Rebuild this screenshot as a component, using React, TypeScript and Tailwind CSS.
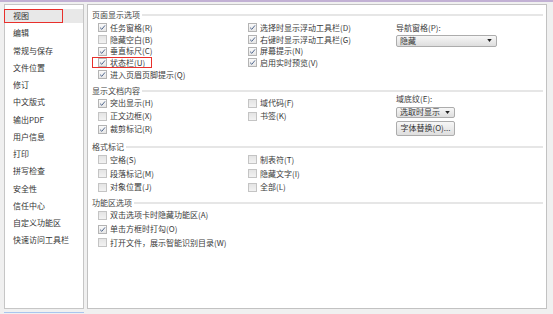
import React from 'react';

const font = { fontFamily: '"Noto Sans CJK SC", "Noto Sans", sans-serif' };

const navItems = [
  '视图',
  '编辑',
  '常规与保存',
  '文件位置',
  '修订',
  '中文版式',
  '输出PDF',
  '用户信息',
  '打印',
  '拼写检查',
  '安全性',
  '信任中心',
  '自定义功能区',
  '快速访问工具栏',
];

const Check: React.FC<{ checked?: boolean; label: string; h: string; outlined?: boolean }> = ({
  checked,
  label,
  h,
  outlined,
}) => (
  <div className={`relative flex items-center gap-[3px] ${h}`}>
    {checked ? (
      <span className="flex h-[9px] w-[9px] shrink-0 items-center justify-center border border-[#b4b4b4] bg-gradient-to-b from-[#fafafa] to-[#e6e6e6]">
        <svg viewBox="0 0 10 10" className="h-[7px] w-[7px]">
          <path d="M1.5 5.2 L4 7.6 L8.6 2" fill="none" stroke="#4e648c" strokeWidth="1.4" />
        </svg>
      </span>
    ) : (
      <span className="h-[9px] w-[9px] shrink-0 border border-[#c4c4c4] bg-gradient-to-b from-[#e4e4e4] to-[#f2f2f2]" />
    )}
    <span className="whitespace-nowrap text-[8px] leading-none text-[#3a3a3a]">{label}</span>
    {outlined && (
      <span className="pointer-events-none absolute left-[-6px] top-[0px] h-[10.5px] w-[60px] border-[1.5px] border-[#e8302c]" />
    )}
  </div>
);

const Heading: React.FC<{ title: string; className?: string }> = ({ title, className }) => (
  <div className={`flex h-[12px] items-center ${className ?? ''}`}>
    <span className="whitespace-nowrap text-[8px] leading-none text-[#444]">{title}</span>
    <span className="ml-[2px] h-[2px] flex-1 bg-[#e6e6e6]" />
  </div>
);

const Select: React.FC<{ value: string; className: string }> = ({ value, className }) => (
  <div
    className={`flex items-center justify-between rounded-[2px] border border-[#acacac] bg-gradient-to-b from-[#f7f7f7] to-[#dedede] pl-[3px] pr-[4px] ${className}`}
  >
    <span className="whitespace-nowrap text-[8px] leading-none text-[#333]">{value}</span>
    <svg viewBox="0 0 6 4" className="h-[3px] w-[5px]">
      <path d="M0 0 H6 L3 4 Z" fill="#222" />
    </svg>
  </div>
);

export default function App() {
  return (
    <div className="relative h-[314px] w-[553px] overflow-hidden bg-[#f0f0f0]" style={font}>
      <div className="h-[2px] bg-[#c2b1d4]" />
      <div className="mt-[2px] flex gap-[3px] pl-[4px]">
        {/* left nav */}
        <div className="flex flex-col">
          <div className="h-[305px] w-[80px] border border-[#c6c6c6] bg-white pt-[2.4px]">
            {navItems.map((item, i) => (
              <div key={item} className="relative flex h-[17.25px] items-center pl-[8px]">
                {i === 0 && (
                  <>
                    <span className="absolute inset-x-0 top-[2px] bottom-[1.5px] bg-[#e8e8e8]" />
                    <span className="absolute left-[-1px] top-[2px] h-[13.5px] w-[59px] border-[1.5px] border-[#e8302c]" />
                  </>
                )}
                <span className="relative whitespace-nowrap text-[8px] leading-none text-[#333]">{item}</span>
              </div>
            ))}
          </div>
          <div className="mt-[3px] h-[1px] w-[80px] bg-[#a9c5ee]" />
        </div>

        {/* right content */}
        <div className="h-[305px] w-[460px] border border-[#c2c2c2] bg-white pl-[4px] pr-[3px] pt-[4px]">
          <Heading title="页面显示选项" />
          <div className="mt-[1px] flex pl-[6px]">
            <div className="w-[150px]">
              <Check checked label="任务窗格(R)" h="h-[11.7px]" />
              <Check label="隐藏空白(B)" h="h-[11.7px]" />
              <Check checked label="垂直标尺(C)" h="h-[11.7px]" />
              <Check checked outlined label="状态栏(U)" h="h-[11.7px]" />
              <Check checked label="进入页眉页脚提示(Q)" h="h-[11.7px]" />
            </div>
            <div className="w-[148px]">
              <Check checked label="选择时显示浮动工具栏(D)" h="h-[11.7px]" />
              <Check checked label="右键时显示浮动工具栏(G)" h="h-[11.7px]" />
              <Check checked label="屏幕提示(N)" h="h-[11.7px]" />
              <Check checked label="启用实时预览(V)" h="h-[11.7px]" />
            </div>
            <div className="flex flex-col">
              <div className="flex h-[11.7px] items-center text-[8px] leading-none text-[#3a3a3a]">导航窗格(P):</div>
              <Select value="隐藏" className="mt-[1px] h-[12px] w-[101px]" />
            </div>
          </div>

          <Heading title="显示文档内容" className="mt-[4.5px]" />
          <div className="flex pl-[6px]">
            <div className="w-[150px]">
              <Check checked label="突出显示(H)" h="h-[13px]" />
              <Check label="正文边框(X)" h="h-[13px]" />
              <Check checked label="裁剪标记(R)" h="h-[13px]" />
            </div>
            <div className="w-[148px]">
              <Check label="域代码(F)" h="h-[13px]" />
              <Check label="书签(K)" h="h-[13px]" />
            </div>
            <div className="-mt-[2px] flex flex-col">
              <div className="flex h-[9px] items-center text-[8px] leading-none text-[#3a3a3a]">域底纹(E):</div>
              <Select value="选取时显示" className="mt-[3px] h-[11px] w-[59px]" />
              <div className="mt-[3px] flex h-[15px] w-[59px] items-center justify-center rounded-[2px] border border-[#acacac] bg-gradient-to-b from-[#f7f7f7] to-[#dedede]">
                <span className="whitespace-nowrap text-[8px] leading-none text-[#333]">字体替换(O)...</span>
              </div>
            </div>
          </div>

          <Heading title="格式标记" className="mt-[5px]" />
          <div className="flex pl-[6px]">
            <div className="w-[150px]">
              <Check label="空格(S)" h="h-[13.8px]" />
              <Check label="段落标记(M)" h="h-[13.8px]" />
              <Check label="对象位置(J)" h="h-[13.8px]" />
            </div>
            <div className="w-[148px]">
              <Check label="制表符(T)" h="h-[13.8px]" />
              <Check label="隐藏文字(I)" h="h-[13.8px]" />
              <Check label="全部(L)" h="h-[13.8px]" />
            </div>
          </div>

          <Heading title="功能区选项" className="mt-[3px]" />
          <div className="-mt-[1px] pl-[6px]">
            <Check label="双击选项卡时隐藏功能区(A)" h="h-[13.8px]" />
            <Check checked label="单击方框时打勾(O)" h="h-[13.8px]" />
            <Check label="打开文件，展示智能识别目录(W)" h="h-[13.8px]" />
          </div>
        </div>
      </div>
    </div>
  );
}
